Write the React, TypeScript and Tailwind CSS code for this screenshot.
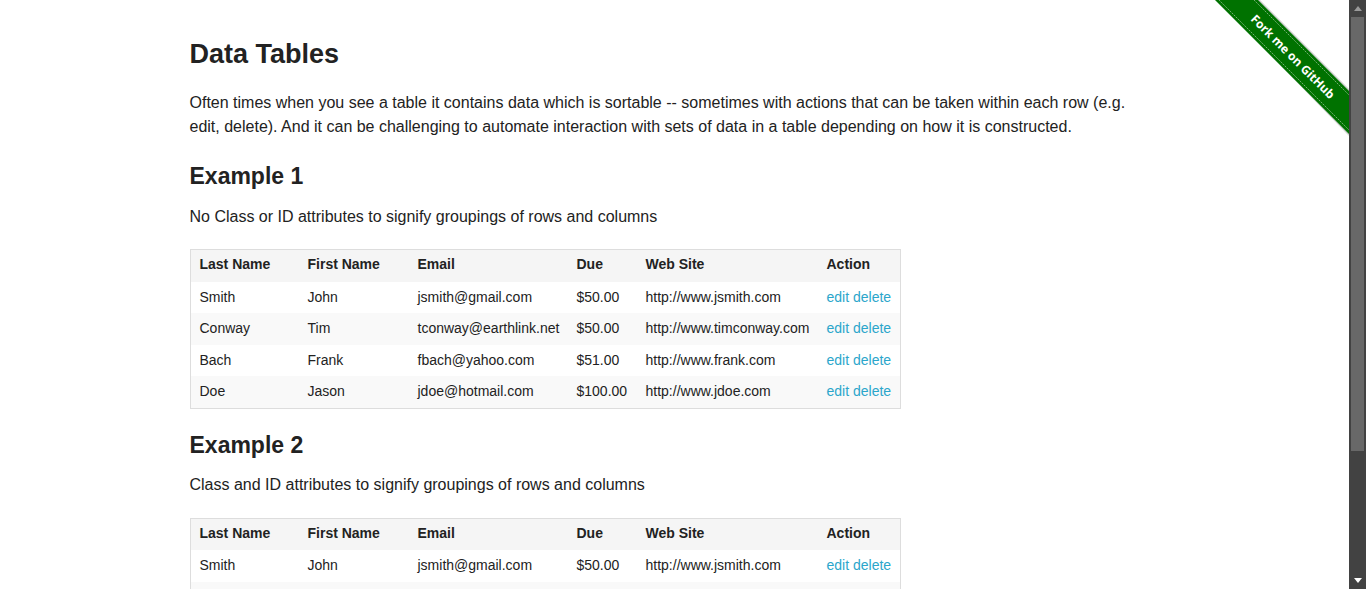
import React from "react";

const rows = [
  ["Smith", "John", "jsmith@gmail.com", "$50.00", "http://www.jsmith.com"],
  ["Conway", "Tim", "tconway@earthlink.net", "$50.00", "http://www.timconway.com"],
  ["Bach", "Frank", "fbach@yahoo.com", "$51.00", "http://www.frank.com"],
  ["Doe", "Jason", "jdoe@hotmail.com", "$100.00", "http://www.jdoe.com"],
];

const headers = ["Last Name", "First Name", "Email", "Due", "Web Site", "Action"];
const widths = ["w-[107px] pl-[9px]", "w-[110px] pl-[10px]", "w-[159px] pl-[10px]", "w-[69px] pl-[10px]", "w-[181px] pl-[10px]", "w-[83px] pl-[10px]"];
const pads = ["pl-[9px]", "pl-[10px]", "pl-[10px]", "pl-[10px]", "pl-[10px]"];

function DataTable() {
  return (
    <table className="w-[711px] table-fixed border-separate border-spacing-0 border border-[#dddddd] text-[14px] leading-[17.5px] text-[#222222]">
      <thead className="bg-[#f5f5f5]">
        <tr>
          {headers.map((h, i) => (
            <th key={h} className={`${widths[i]} pr-[10px] pt-[6px] pb-[8px] text-left font-bold`}>
              {h}
            </th>
          ))}
        </tr>
      </thead>
      <tbody>
        {rows.map((r, ri) => (
          <tr key={ri} className={ri % 2 === 1 ? "bg-[#f9f9f9]" : "bg-white"}>
            {r.map((c, ci) => (
              <td key={ci} className={`${pads[ci]} whitespace-nowrap pr-[10px] py-[7px]`}>
                {c}
              </td>
            ))}
            <td className="whitespace-nowrap px-[10px] py-[7px]">
              <a className="text-[#2ba6cb]" href="#">edit</a>{" "}
              <a className="text-[#2ba6cb]" href="#">delete</a>
            </td>
          </tr>
        ))}
      </tbody>
    </table>
  );
}

function Ribbon() {
  return (
    <div className="pointer-events-none absolute right-0 top-0 h-[149px] w-[149px] overflow-hidden">
      <svg width="149" height="149" viewBox="0 0 149 149">
        <polygon points="17,0 60,0 149,89 149,136" fill="#000000" opacity="0.18" />
        <polygon points="15,0 58,0 149,91 149,134" fill="#007200" />
        <line x1="19" y1="0" x2="149" y2="130" stroke="#ffffff" strokeOpacity="0.55" strokeWidth="0.8" strokeDasharray="2 1" />
        <line x1="54" y1="0" x2="149" y2="95" stroke="#ffffff" strokeOpacity="0.55" strokeWidth="0.8" strokeDasharray="2 1" />
        <text
          x="93"
          y="56.5"
          transform="rotate(45 93 56.5)"
          textAnchor="middle"
          dominantBaseline="central"
          fill="#ffffff"
          style={{ fontFamily: "'Open Sans', 'DejaVu Sans', sans-serif", fontWeight: 700, fontSize: "12px" }}
        >
          Fork me on GitHub
        </text>
      </svg>
    </div>
  );
}

function Scrollbar() {
  return (
    <div className="flex h-[589px] w-[17px] shrink-0 flex-col bg-[#424242]">
      <div className="flex h-[17px] items-center justify-center">
        <svg width="8" height="5" viewBox="0 0 8 5">
          <polygon points="0,5 8,5 4,0" fill="#9a9a9a" />
        </svg>
      </div>
      <div className="ml-[2px] mr-[2px] h-[434px] bg-[#686868]" />
      <div className="flex-1" />
      <div className="flex h-[17px] items-center justify-center">
        <svg width="8" height="5" viewBox="0 0 8 5">
          <polygon points="0,0 8,0 4,5" fill="#ffffff" />
        </svg>
      </div>
    </div>
  );
}

export default function App() {
  return (
    <div
      className="flex h-[589px] w-full overflow-hidden bg-white text-[#222222]"
      style={{ fontFamily: "'Liberation Sans', Arial, sans-serif" }}
    >
      <div className="relative h-[589px] flex-1 overflow-hidden">
        <div className="mx-auto w-[1000px] px-[15px]">
          <h3 className="mt-[38px] text-[27px] font-bold leading-[32px]">Data Tables</h3>
          <p className="mt-[21px] text-[16px] leading-[24px]">
            Often times when you see a table it contains data which is sortable -- sometimes with actions that can be
            taken within each row (e.g. edit, delete). And it can be challenging to automate interaction with sets of
            data in a table depending on how it is constructed.
          </p>
          <h4 className="mt-[23px] text-[23px] font-bold leading-[28px]">Example 1</h4>
          <p className="mt-[14.5px] text-[16px] leading-[24px]">
            No Class or ID attributes to signify groupings of rows and columns
          </p>
          <div className="mt-[20.5px]">
            <DataTable />
          </div>
          <h4 className="mt-[22px] text-[23px] font-bold leading-[28px]">Example 2</h4>
          <p className="mt-[14.5px] text-[16px] leading-[24px]">
            Class and ID attributes to signify groupings of rows and columns
          </p>
          <div className="mt-[20.5px]">
            <DataTable />
          </div>
        </div>
        <Ribbon />
      </div>
      <Scrollbar />
    </div>
  );
}
